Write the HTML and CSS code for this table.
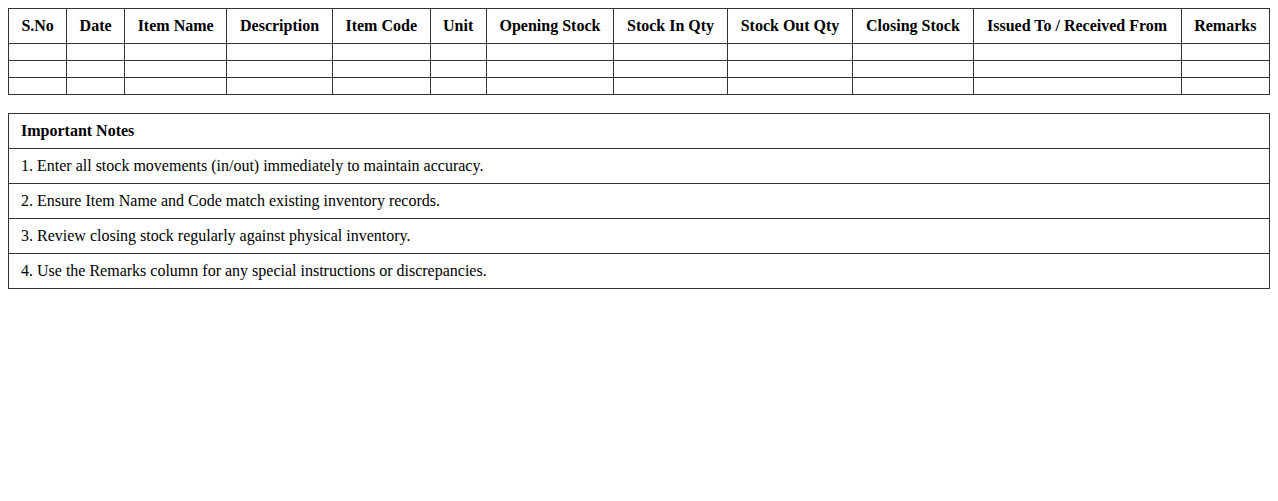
FILE: index.html
```html
<!DOCTYPE html>
<html>
<head>
<meta charset="utf-8">
<link rel="stylesheet" href="styles.css">
</head>
<body>
<table class="grid">
<thead>
<tr>
<th>S.No</th><th>Date</th><th>Item Name</th><th>Description</th><th>Item Code</th><th>Unit</th><th>Opening Stock</th><th>Stock In Qty</th><th>Stock Out Qty</th><th>Closing Stock</th><th>Issued To / Received From</th><th>Remarks</th>
</tr>
</thead>
<tbody>
<tr><td></td><td></td><td></td><td></td><td></td><td></td><td></td><td></td><td></td><td></td><td></td><td></td></tr>
<tr><td></td><td></td><td></td><td></td><td></td><td></td><td></td><td></td><td></td><td></td><td></td><td></td></tr>
<tr><td></td><td></td><td></td><td></td><td></td><td></td><td></td><td></td><td></td><td></td><td></td><td></td></tr>
</tbody>
</table>
<table class="grid notes">
<thead><tr><th>Important Notes</th></tr></thead>
<tbody>
<tr><td>1. Enter all stock movements (in/out) immediately to maintain accuracy.</td></tr>
<tr><td>2. Ensure Item Name and Code match existing inventory records.</td></tr>
<tr><td>3. Review closing stock regularly against physical inventory.</td></tr>
<tr><td>4. Use the Remarks column for any special instructions or discrepancies.</td></tr>
</tbody>
</table>
</body>
</html>
```
FILE: styles.css
```css
body {
  margin: 8px;
  font-family: "Liberation Serif", "Times New Roman", serif;
  font-size: 16px;
  color: #000;
  background: #fff;
}
.grid {
  width: 100%;
  border-collapse: collapse;
  margin-bottom: 18px;
}
.grid th,
.grid td {
  border: 1px solid #333;
  padding: 8px 12px;
  text-align: center;
}
.grid th {
  font-weight: bold;
}
.notes th,
.notes td {
  text-align: left;
}
```
